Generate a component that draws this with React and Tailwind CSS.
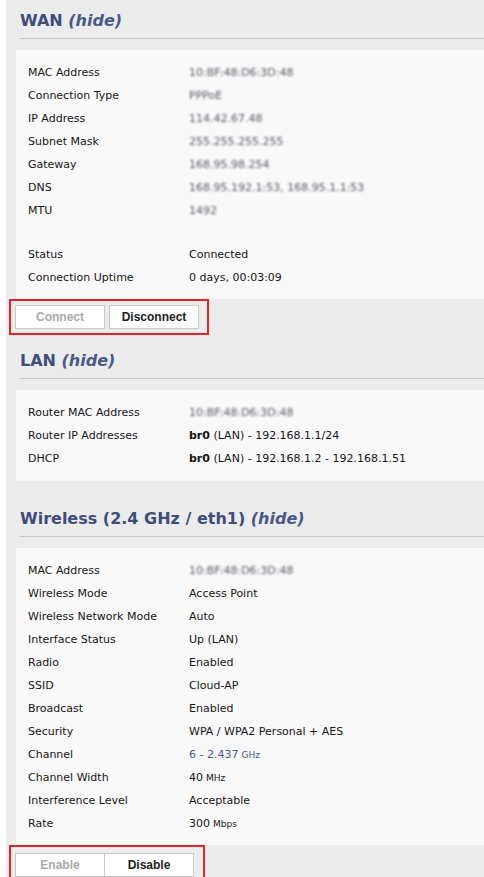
import React from 'react'

const FONT = "font-['DejaVu_Sans',sans-serif]"

// blurred values (the screenshot pixelates private data)
function Blurred({ children }) {
  return <span className="blur-[1px] text-[#5f5868] select-none">{children}</span>
}

function Unit({ children }) {
  return <span className="text-[9px] ml-[3px]">{children}</span>
}

function Header({ title }) {
  return (
    <div className="ml-[4px] h-[39px] border-b border-[#c6c6c6] pt-[9px]">
      <h2 className="text-[16px] leading-[24px] font-bold text-[#3e4d7b] whitespace-nowrap">
        {title} <i className="text-[#4a5888]">(hide)</i>
      </h2>
    </div>
  )
}

function Rows({ rows }) {
  return rows.map((r, i) =>
    r === null ? (
      <div key={i} className="h-[21px]" />
    ) : (
      <div key={i} className="flex h-[23px] items-center text-[11px] text-[#161616]">
        <div className="w-[161px] shrink-0">{r[0]}</div>
        <div className="whitespace-nowrap">{r[1]}</div>
      </div>
    )
  )
}

function Panel({ rows, pb }) {
  return (
    <div className={`mt-[11px] bg-[#f9f9f9] pl-[12px] pt-[12px] ${pb}`}>
      <Rows rows={rows} />
    </div>
  )
}

const wanRows = [
  ['MAC Address', <Blurred>10:BF:48:D6:3D:48</Blurred>],
  ['Connection Type', <Blurred>PPPoE</Blurred>],
  ['IP Address', <Blurred>114.42.67.48</Blurred>],
  ['Subnet Mask', <Blurred>255.255.255.255</Blurred>],
  ['Gateway', <Blurred>168.95.98.254</Blurred>],
  ['DNS', <Blurred>168.95.192.1:53, 168.95.1.1:53</Blurred>],
  ['MTU', <Blurred>1492</Blurred>],
  null,
  ['Status', 'Connected'],
  ['Connection Uptime', '0 days, 00:03:09'],
]

const lanRows = [
  ['Router MAC Address', <Blurred>10:BF:48:D6:3D:48</Blurred>],
  ['Router IP Addresses', <><b>br0</b> (LAN) - 192.168.1.1/24</>],
  ['DHCP', <><b>br0</b> (LAN) - 192.168.1.2 - 192.168.1.51</>],
]

const wlRows = [
  ['MAC Address', <Blurred>10:BF:48:D6:3D:48</Blurred>],
  ['Wireless Mode', 'Access Point'],
  ['Wireless Network Mode', 'Auto'],
  ['Interface Status', 'Up (LAN)'],
  ['Radio', 'Enabled'],
  ['SSID', 'Cloud-AP'],
  ['Broadcast', 'Enabled'],
  ['Security', 'WPA / WPA2 Personal + AES'],
  ['Channel', <span className="text-[#4b5a8c]">6 - 2.437<Unit>GHz</Unit></span>],
  ['Channel Width', <>40<Unit>MHz</Unit></>],
  ['Interference Level', 'Acceptable'],
  ['Rate', <>300<Unit>Mbps</Unit></>],
]

const btn = "h-[24px] w-[90px] border border-[#c9c9c9] bg-white text-[12px] font-bold font-['Liberation_Sans',Arial,sans-serif]"

export default function App() {
  return (
    <div className={`min-h-[877px] overflow-hidden bg-[#ececec] border-l-[6px] border-white pl-[10px] ${FONT}`}>
      {/* WAN */}
      <Header title="WAN" />
      <Panel rows={wanRows} pb="pb-[9px]" />
      <div className="-ml-[7px] mb-[5px] h-[36px] w-[200px] border-2 border-[#e8202a] pl-[4px] pt-[4px] flex gap-[4px]">
        <button className={`${btn} text-[#a9a9a9]`}>Connect</button>
        <button className={`${btn} text-[#1e1e1e]`}>Disconnect</button>
      </div>

      {/* LAN */}
      <Header title="LAN" />
      <Panel rows={lanRows} pb="pb-[10px]" />
      <div className="h-[17px]" />

      {/* Wireless */}
      <Header title="Wireless (2.4 GHz / eth1)" />
      <Panel rows={wlRows} pb="pb-[9px]" />
      <div className="-ml-[7px] h-[40px] w-[196px] border-2 border-[#e8202a] pl-[4px] pt-[6px] flex">
        <button className={`${btn} text-[#a9a9a9]`}>Enable</button>
        <button className={`${btn} -ml-px w-[90px] text-[#1e1e1e]`}>Disable</button>
      </div>
    </div>
  )
}
